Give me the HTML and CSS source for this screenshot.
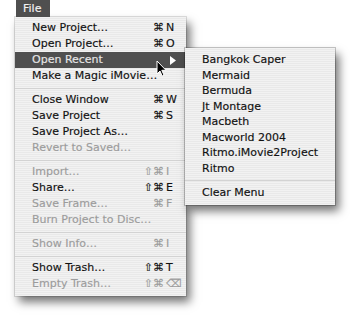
FILE: index.html
```html
<!DOCTYPE html>
<html lang="en">
<head>
    <meta charset="UTF-8">
    <title>iMovie File Menu</title>
    <link rel="stylesheet" href="styles.css">
</head>
<body>
    <!-- Menu bar title -->
    <div class="menubar">
        <span class="menu-title">File</span>
    </div>

    <!-- File menu -->
    <div class="menu menu-main">
        <div class="item"><span class="label">New Project…</span><span class="mods">⌘</span><span class="key">N</span></div>
        <div class="item"><span class="label">Open Project…</span><span class="mods">⌘</span><span class="key">O</span></div>
        <div class="item selected">
            <span class="label">Open Recent</span><span class="mods"></span>
            <span class="key"><svg class="arrow" width="6" height="9" viewBox="0 0 6 9"><polygon points="0,0 6,4.5 0,9" fill="#fff"/></svg></span>
        </div>
        <div class="item"><span class="label">Make a Magic iMovie…</span><span class="mods"></span><span class="key"></span></div>
        <div class="sep"></div>
        <div class="item"><span class="label">Close Window</span><span class="mods">⌘</span><span class="key">W</span></div>
        <div class="item"><span class="label">Save Project</span><span class="mods">⌘</span><span class="key">S</span></div>
        <div class="item"><span class="label">Save Project As…</span><span class="mods"></span><span class="key"></span></div>
        <div class="item disabled"><span class="label">Revert to Saved…</span><span class="mods"></span><span class="key"></span></div>
        <div class="sep"></div>
        <div class="item disabled"><span class="label">Import…</span><span class="mods">⇧⌘</span><span class="key">I</span></div>
        <div class="item"><span class="label">Share…</span><span class="mods">⇧⌘</span><span class="key">E</span></div>
        <div class="item disabled"><span class="label">Save Frame…</span><span class="mods">⌘</span><span class="key">F</span></div>
        <div class="item disabled"><span class="label">Burn Project to Disc…</span><span class="mods"></span><span class="key"></span></div>
        <div class="sep"></div>
        <div class="item disabled"><span class="label">Show Info…</span><span class="mods">⌘</span><span class="key">I</span></div>
        <div class="sep"></div>
        <div class="item"><span class="label">Show Trash…</span><span class="mods">⇧⌘</span><span class="key">T</span></div>
        <div class="item disabled"><span class="label">Empty Trash…</span><span class="mods">⇧⌘</span><span class="key">⌫</span></div>
    </div>

    <!-- Open Recent submenu -->
    <div class="menu menu-sub">
        <div class="item"><span class="label">Bangkok Caper</span></div>
        <div class="item"><span class="label">Mermaid</span></div>
        <div class="item"><span class="label">Bermuda</span></div>
        <div class="item"><span class="label">Jt Montage</span></div>
        <div class="item"><span class="label">Macbeth</span></div>
        <div class="item"><span class="label">Macworld 2004</span></div>
        <div class="item"><span class="label">Ritmo.iMovie2Project</span></div>
        <div class="item"><span class="label">Ritmo</span></div>
        <div class="sep"></div>
        <div class="item"><span class="label">Clear Menu</span></div>
    </div>

    <!-- Mouse pointer -->
    <svg class="cursor" width="12" height="18" viewBox="0 0 12 18">
        <path d="M1 1 V14 L4 11 L6.2 16 L8 15.2 L5.8 10.3 H10 Z" fill="#000" stroke="#fff" stroke-width="1" stroke-linejoin="round"/>
    </svg>
</body>
</html>
```

FILE: styles.css
```css
* {
    margin: 0;
    padding: 0;
    box-sizing: border-box;
}

body {
    font-family: 'DejaVu Sans', 'Noto Sans', sans-serif;
    font-size: 11px;
    color: #111;
    background: #fff;
    width: 350px;
    height: 318px;
    overflow: hidden;
    position: relative;
    -webkit-text-stroke: 0.15px currentColor;
}

/* menu bar */
.menubar {
    display: flex;
    height: 17px;
    padding-left: 16px;
}

.menu-title {
    width: 34px;
    padding-left: 7px;
    line-height: 17px;
    background: #4f4f4f;
    color: #f2f2f2;
}

/* menus */
.menu {
    background: repeating-linear-gradient(to bottom, #f2f2f2 0, #f2f2f2 1px, #e9e9e9 1px, #e9e9e9 2px);
    box-shadow: 0 0 0 1px rgba(0, 0, 0, 0.12), 4px 6px 9px rgba(0, 0, 0, 0.55);
}

.menu-main {
    width: 171px;
    margin-left: 15px;
    padding: 3px 0 4px;
}

.menu-sub {
    position: absolute;
    left: 185px;
    top: 48px;
    width: 150px;
    padding: 4px 0;
    box-shadow: 0 0 0 1px rgba(0, 0, 0, 0.22), 4px 6px 9px rgba(0, 0, 0, 0.55);
}

.item {
    display: grid;
    grid-template-columns: 1fr auto 14px;
    column-gap: 2px;
    height: 16px;
    line-height: 16px;
    padding: 0 6px 0 17px;
    white-space: nowrap;
}

.menu-sub .item {
    height: 15.5px;
    line-height: 15.5px;
}

.mods {
    text-align: right;
}

.key {
    display: flex;
    align-items: center;
}

.item.disabled {
    color: #9c9c9c;
}

.item.selected {
    background: #4f4f4f;
    color: #e6e6e6;
}

.arrow {
    margin-left: 4px;
}

.sep {
    display: flex;
    align-items: center;
    height: 8px;
}

.sep::after {
    content: "";
    flex: 1;
    height: 1px;
    background: #d3d3d3;
}

.menu-sub .sep {
    height: 9px;
}

/* pointer */
.cursor {
    position: absolute;
    left: 156px;
    top: 60px;
}
```
